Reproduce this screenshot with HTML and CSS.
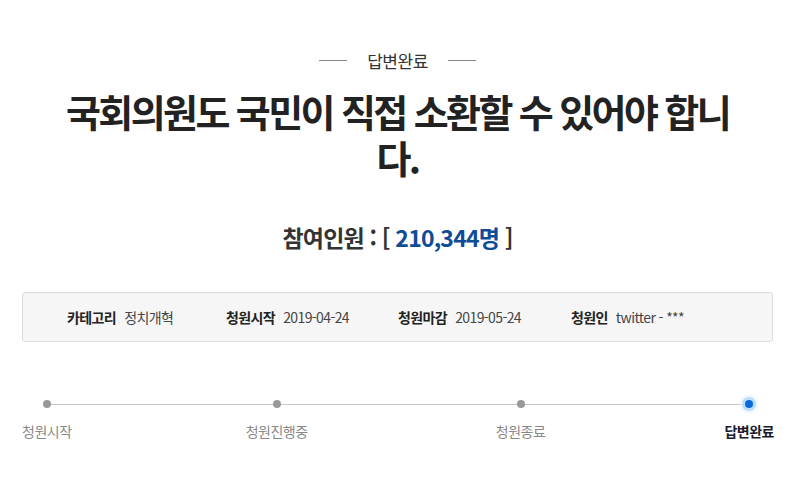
FILE: index.html
```html
<!DOCTYPE html>
<html lang="ko">
<head>
<meta charset="utf-8">
<link rel="stylesheet" href="styles.css">
</head>
<body>
<div class="wrap">
  <div class="status">
    <span class="rule"></span>
    <span class="status-text">답변완료</span>
    <span class="rule"></span>
  </div>
  <h1 class="title">국회의원도 국민이 직접 소환할 수 있어야 합니다.</h1>
  <div class="count">참여인원 : [ <span class="num">210,344명</span> ]</div>
  <ul class="info">
    <li><strong>카테고리</strong><span>정치개혁</span></li>
    <li><strong>청원시작</strong><span>2019-04-24</span></li>
    <li><strong>청원마감</strong><span>2019-05-24</span></li>
    <li><strong>청원인</strong><span>twitter - ***</span></li>
  </ul>
  <div class="steps">
    <div class="track"></div>
    <div class="step"><i class="dot"></i><span>청원시작</span></div>
    <div class="step"><i class="dot"></i><span>청원진행중</span></div>
    <div class="step"><i class="dot"></i><span>청원종료</span></div>
    <div class="step on"><i class="dot"></i><span>답변완료</span></div>
  </div>
</div>
</body>
</html>
```

FILE: styles.css
```css
* { box-sizing: border-box; }
html, body { margin: 0; padding: 0; background: #fff; }
body {
  font-family: "Noto Sans CJK KR", "Noto Sans", sans-serif;
  color: #333;
}
.wrap {
  width: 751px;
  margin-left: 22px;
  padding-top: 45px;
}
.status {
  display: flex;
  justify-content: center;
  align-items: center;
  gap: 20px;
  height: 30px;
}
.rule {
  width: 28px;
  height: 1px;
  background: #888;
}
.status-text {
  font-size: 17px;
  color: #333;
  letter-spacing: -0.5px;
}
.title {
  margin: 13px auto 0;
  width: 680px;
  text-align: center;
  font-size: 38px;
  line-height: 46px;
  font-weight: 700;
  color: #222;
  letter-spacing: -2.6px;
}
.count {
  margin-top: 42px;
  text-align: center;
  font-size: 23px;
  font-weight: 700;
  color: #333;
  letter-spacing: -0.8px;
  line-height: 30px;
}
.count .num { color: #0f4c98; }
.info {
  list-style: none;
  margin: 40px 0 0;
  padding: 0 0 0 44px;
  height: 50px;
  display: flex;
  align-items: center;
  background: #f6f6f6;
  border: 1px solid #dcdcdc;
  border-radius: 3px;
  font-size: 14px;
  letter-spacing: -0.6px;
}
.info li {
  display: flex;
  gap: 8px;
}
.info li:nth-child(1) { width: 159px; }
.info li:nth-child(2) { width: 172px; }
.info li:nth-child(3) { width: 173px; }
.info strong { font-weight: 700; color: #222; }
.info span { color: #444; }
.steps {
  position: relative;
  display: flex;
  justify-content: space-between;
  margin-top: 58px;
}
.track {
  position: absolute;
  left: 24px;
  right: 25px;
  top: 4px;
  height: 1px;
  background: #c8c8c8;
}
.step {
  position: relative;
  display: flex;
  flex-direction: column;
  align-items: center;
  gap: 13px;
  font-size: 14px;
  color: #888;
  letter-spacing: -0.5px;
}
.step:nth-child(3) { left: -6px; }
.step:nth-child(4) { left: 2px; }
.step:nth-child(5) { left: 1px; }
.dot {
  width: 8px;
  height: 8px;
  border-radius: 50%;
  background: #999;
}
.step.on { color: #1a1a2e; font-weight: 700; }
.step.on .dot {
  background: #0b6ad8;
  box-shadow: 0 0 0 3px #bcdcfb, 0 0 4px 4px #e0effd;
}
```
